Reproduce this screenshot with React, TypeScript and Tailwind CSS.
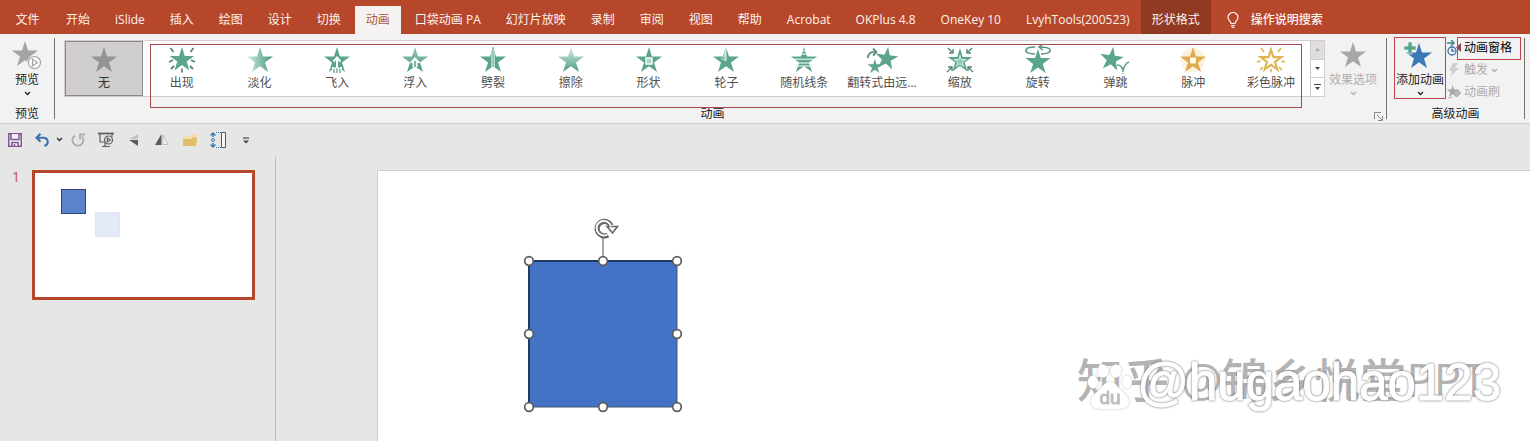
import { useState } from 'react'
import type { ReactNode } from 'react'

const STAR = '14,0 17,9.5 27,9.5 19,15.5 22,25 14,19.2 6,25 9,15.5 1,9.5 11,9.5'
const GREEN = '#5ba58c'
const GOLD = '#dfb552'

const tabs = ['开始', 'iSlide', '插入', '绘图', '设计', '切换', '动画', '口袋动画 PA', '幻灯片放映', '录制', '审阅', '视图', '帮助', 'Acrobat', 'OKPlus 4.8', 'OneKey 10', 'LvyhTools(200523)']

interface StarProps {
  fill?: string
  transform?: string
}

function Star({ fill = GREEN, transform }: StarProps) {
  return <polygon points={STAR} fill={fill} transform={transform} />
}

function Gradient({ id, from, to, vertical }: { id: string; from: string; to: string; vertical?: boolean }) {
  return (
    <linearGradient id={id} x1="0" y1="0" x2={vertical ? '0' : '1'} y2={vertical ? '1' : '0'}>
      <stop offset="0.1" stopColor={from} />
      <stop offset="0.9" stopColor={to} />
    </linearGradient>
  )
}

const effects: { name: string; icon: ReactNode }[] = [
  { name: '无', icon: <Star fill="#959392" /> },
  {
    name: '出现',
    icon: (
      <>
        <Star transform="translate(0.8 0) scale(0.94)" />
        <path d="M2.500 1l3 4M25.500 1l-3 4M1 15l4-2M27 15l-4-2M3 22l3-3M25 22l-3-3M14 21.500v4" stroke="#5b8478" strokeWidth="1.8" fill="none" />
      </>
    ),
  },
  {
    name: '淡化',
    icon: (
      <>
        <Gradient id="fade" from="#c5e2d8" to="#4f9f84" />
        <Star fill="url(#fade)" />
      </>
    ),
  },
  {
    name: '飞入',
    icon: (
      <>
        <Star />
        <path d="M14 10v13M10.5 14.5l3.5-4 3.5 4M10 20v6M18 20v6" stroke="#fff" strokeWidth="2" fill="none" />
        <path d="M11 22v4M14 21v5M17 22v4" stroke={GREEN} strokeWidth="1.3" fill="none" />
      </>
    ),
  },
  {
    name: '浮入',
    icon: (
      <>
        <Gradient id="float" from="#8fc1b0" to="#4f9f84" vertical />
        <Star fill="url(#float)" />
        <path d="M14 10l5.5 6h-3v4h-5v-4h-3z" fill="#fff" />
        <path d="M14 14v6" stroke={GREEN} strokeWidth="1.6" />
      </>
    ),
  },
  {
    name: '劈裂',
    icon: (
      <>
        <Star />
        <path d="M14 0l2 6v14.5l-2-1.3-2 1.3V6z" fill="#b5dacd" />
        <path d="M14 0v19" stroke="#7db5a2" />
      </>
    ),
  },
  {
    name: '擦除',
    icon: (
      <>
        <Gradient id="wipe" from="#c9e4db" to="#5ba58c" vertical />
        <Star fill="url(#wipe)" />
      </>
    ),
  },
  {
    name: '形状',
    icon: (
      <>
        <Star />
        <rect x="11" y="11" width="6" height="6" fill="#a9d5c5" stroke="#fff" strokeWidth="1.4" />
      </>
    ),
  },
  {
    name: '轮子',
    icon: (
      <>
        <Star />
        <path d="M14 0v14l-3-4.5z" fill="#b5dacd" />
        <path d="M14 0v14L9 11" fill="none" stroke="#fff" strokeWidth="0.8" />
      </>
    ),
  },
  {
    name: '随机线条',
    icon: (
      <>
        <Star />
        <path d="M9 4h10M9 7h10M0 12.2h28M0 16h28M0 19h28" stroke="#fff" strokeWidth="1" />
      </>
    ),
  },
  {
    name: '翻转式由远...',
    icon: (
      <>
        <Star transform="translate(8 -2) rotate(8) scale(0.88)" />
        <Star transform="translate(-1 12) scale(0.56)" />
        <path d="M0 11C0 6 3 4.500 8 5M5 1.500l3.500 3.500L5 8.500" stroke="#5b9180" strokeWidth="1.8" fill="none" />
      </>
    ),
  },
  {
    name: '缩放',
    icon: (
      <>
        <Star transform="translate(0.8 1) scale(0.94)" />
        <Star fill="#cfe9e0" transform="translate(6.300 6.800) scale(0.55)" />
        <Star fill="#8cc7b2" transform="translate(9.600 10) scale(0.32)" />
        <path d="M2 1l5 5M3 6h4V2M26 1l-5 5M25 6h-4V2M1 25l5-5M2 20h4v4M27 25l-5-5M26 20h-4v4" stroke="#5b8478" strokeWidth="1.4" fill="none" />
      </>
    ),
  },
  {
    name: '旋转',
    icon: (
      <>
        <Star transform="translate(0.5 2) scale(0.96)" />
        <path d="M11 7C4 7 1 5 2 2.500S8 0 11 0M17 7c7 0 10-2 9-4.500S20 0 15 0M19-3l-4 3 4 3" stroke="#5b9180" strokeWidth="1.5" fill="none" />
      </>
    ),
  },
  {
    name: '弹跳',
    icon: (
      <>
        <Star transform="translate(-0.500 -2) rotate(8) scale(0.92)" />
        <path d="M16 18c4 0 5 2 6 6 1-5 3-8 6-9" stroke={GREEN} strokeWidth="1.5" fill="none" />
        <path d="M22 20v7" stroke={GREEN} strokeWidth="1.3" strokeDasharray="2 1" />
      </>
    ),
  },
  {
    name: '脉冲',
    icon: (
      <>
        <circle cx="14" cy="13" r="12" fill="#f9e6c3" opacity="0.6" />
        <Star fill="#dfa94e" />
        <rect x="11" y="10.500" width="6" height="6" rx="1" fill="#fffbe9" />
      </>
    ),
  },
  {
    name: '彩色脉冲',
    icon: (
      <>
        <polygon points={STAR} fill="#fffdf4" stroke={GOLD} strokeWidth="2.6" transform="translate(2.800 2.500) scale(0.8)" />
        <path d="M4 1l3 4M24 1l-3 4M0 15l3.500-1M28 15l-3.500-1M3 23l3-3M25 23l-3-3M14 22v3.500" stroke={GOLD} strokeWidth="1.6" fill="none" />
      </>
    ),
  },
]

function StarIcon({ children }: { children: ReactNode }) {
  return (
    <svg width="28" height="26" viewBox="0 0 28 26" className="shrink-0 overflow-visible">
      {children}
    </svg>
  )
}

function Chevron({ className }: { className?: string }) {
  return (
    <svg width="7" height="5" viewBox="0 0 7 5" fill="none" stroke="currentColor" strokeWidth="1.3" className={className}>
      <path d="M1 1l2.500 2.500L6 1" />
    </svg>
  )
}

function Divider() {
  return <div className="mt-1 mb-1 w-px shrink-0 bg-[#77706e]" />
}

function TabBar() {
  const [active, setActive] = useState('动画')
  return (
    <nav className="flex h-[34px] items-end overflow-hidden bg-[#b7472a] text-xs whitespace-nowrap text-[#fdf3ee]">
      <button className="h-7 w-[55px] shrink-0">文件</button>
      <div className="flex shrink-0 gap-[3px]">
        {tabs.map((tab) => (
          <button
            key={tab}
            onClick={() => setActive(tab)}
            className={`h-7 shrink-0 px-[11px] ${tab === active ? 'bg-[#f5f3f2] text-[#b0563a]' : ''}`}
          >
            {tab}
          </button>
        ))}
      </div>
      <button className="h-[34px] shrink-0 bg-[#923921] px-[11px] pt-1.5">形状格式</button>
      <label className="flex h-7 items-center gap-3 pl-4">
        <svg width="12" height="16" viewBox="0 0 12 16" fill="none" stroke="currentColor" strokeWidth="1.2">
          <path d="M4 11.500C4 9 1 8.500 1 5.500a5 5 0 0110 0c0 3-3 3.500-3 6zM4 13.500h4M4.500 15.300h3" />
        </svg>
        <input
          aria-label="操作说明搜索"
          placeholder="操作说明搜索"
          className="w-28 bg-transparent font-medium outline-none placeholder:text-[#fdf3ee] placeholder:opacity-100"
        />
      </label>
    </nav>
  )
}

function Gallery() {
  const [selected, setSelected] = useState('无')
  return (
    <div className="relative mt-1.5 flex h-[57px] min-w-0 flex-1 border border-[#d2cccc] bg-white">
      {effects.map(({ name, icon }) => (
        <button
          key={name}
          onClick={() => setSelected(name)}
          className={`flex min-w-0 flex-1 flex-col items-center border pt-[5px] leading-4 whitespace-nowrap ${
            selected === name ? 'border-[#8b8987] bg-[#d0cfcd] text-[#333]' : 'border-transparent text-[#505050]'
          }`}
        >
          <StarIcon>{icon}</StarIcon>
          <span className="mt-0.5">{name}</span>
        </button>
      ))}
      <div className="flex w-[14px] shrink-0 flex-col divide-y divide-[#d2cccc] border-l border-[#d2cccc] text-[#444]">
        <button aria-label="上一行" className="flex flex-1 items-center justify-center bg-[#dfdddd] text-[#aaa]">
          <svg width="5" height="3" viewBox="0 0 5 3" fill="currentColor"><path d="M0 3l2.500-3L5 3z" /></svg>
        </button>
        <button aria-label="下一行" className="flex flex-1 items-center justify-center">
          <svg width="5" height="3" viewBox="0 0 5 3" fill="currentColor"><path d="M0 0h5L2.500 3z" /></svg>
        </button>
        <button aria-label="其他" className="flex flex-1 items-center justify-center">
          <svg width="7" height="6" viewBox="0 0 7 6" fill="currentColor"><path d="M0 0h7v1H0zM1 3h5L3.500 6z" /></svg>
        </button>
      </div>
      {/* Marker around the effects */}
      <div className="pointer-events-none absolute top-[3px] right-[22px] -bottom-3 left-[85px] border border-[#a64850]" />
    </div>
  )
}

function Ribbon() {
  return (
    <section className="flex h-[90px] border-b border-[#d3d1d0] bg-[#f3f2f2] text-xs whitespace-nowrap text-[#222]">
      <div className="flex w-[54px] shrink-0 flex-col">
        <button className="flex flex-1 flex-col items-center pt-[7px] leading-4">
          <svg width="30" height="30" viewBox="0 0 30 30" className="mb-px">
            <Star fill="#a5a3a3" transform="translate(-1 0)" />
            <circle cx="22.500" cy="21.500" r="7.300" fill="#f3f2f2" />
            <circle cx="22.500" cy="21.500" r="6" fill="#fff" stroke="#a5a3a3" strokeWidth="1.200" />
            <path d="M20.500 18.200l5 3.300-5 3.300z" fill="none" stroke="#a5a3a3" strokeWidth="1.200" />
          </svg>
          预览
          <Chevron className="mt-[3px]" />
        </button>
        <p className="h-5 pt-px text-center leading-5">预览</p>
      </div>
      <Divider />
      <div className="flex min-w-0 flex-1 flex-col">
        <div className="flex flex-1 pr-[5px] pl-[9px]">
          <Gallery />
          <button className="flex w-14 shrink-0 flex-col items-center pt-2 leading-4 text-[#b0aeae]">
            <StarIcon>
              <Star fill="#a8a6a6" />
            </StarIcon>
            <span className="mt-1">效果选项</span>
            <Chevron className="mt-[3px]" />
          </button>
        </div>
        <div className="flex h-5 leading-5">
          <p className="flex-1 pt-px pr-1 text-center">动画</p>
          <button aria-label="动画设置" className="flex w-3 items-center pt-1.5">
            <svg width="9" height="9" viewBox="0 0 9 9" fill="none" stroke="#8a8888">
              <path d="M.5 7V.5H7M3 3l5 5M8.500 4v4.500H4" />
            </svg>
          </button>
        </div>
      </div>
      <Divider />
      <div className="flex w-[137px] shrink-0 flex-col">
        <div className="flex flex-1 pl-[7px]">
          <button className="mt-[3px] mb-1 flex w-[52px] shrink-0 flex-col items-center border border-[#c0444c] pt-1 leading-4">
            <svg width="32" height="28" viewBox="0 0 32 28" className="mb-0.5">
              <Star fill="#3a78b7" transform="translate(1 1)" />
              <path d="M4 0h4v4h4v4H8v4H4V8H0V4h4z" fill="#5ba58c" stroke="#f3f2f2" strokeWidth="0.600" />
            </svg>
            添加动画
            <Chevron className="mt-[3px]" />
          </button>
          <div className="relative flex flex-col pt-[3px] pl-px">
            <button className="flex h-[22px] items-center gap-[3px] text-black">
              <svg width="14" height="16" viewBox="0 0 14 16" fill="none" strokeWidth="1.400">
                <path d="M0 3h6M4 0l3 3-3 3" stroke="#3a8780" />
                <circle cx="5" cy="11" r="4" stroke="#3c78ac" />
                <path d="M5 8.500V11h2.500" stroke="#3c78ac" />
                <path d="M14 3v9L9 7.500z" fill="#8b4450" />
              </svg>
              动画窗格
            </button>
            <button className="flex h-[22px] items-center gap-[3px] text-[#aeacac]">
              <svg width="14" height="14" viewBox="0 0 14 14" fill="#cfcdcd">
                <path d="M6 0h5L8 5h4L3 14l2.500-6H2z" />
              </svg>
              触发
              <Chevron />
            </button>
            <button className="flex h-[21px] items-center gap-[3px] text-[#aeacac]">
              <svg width="14" height="14" viewBox="0 0 14 14">
                <Star fill="#a8a6a6" transform="translate(-1 0) scale(0.480)" />
                <path d="M7 10l4-5 3 3-4 4zM1 13l5-1" fill="#b8b6b6" stroke="#b8b6b6" />
              </svg>
              动画刷
            </button>
            <div className="pointer-events-none absolute top-[3px] left-[11px] h-[23px] w-16 border border-[#c0444c]" />
          </div>
        </div>
        <p className="h-5 pt-px text-center leading-5">高级动画</p>
      </div>
      <Divider />
      <div className="w-[5px] shrink-0" />
    </section>
  )
}

const quickTools: { label: string; icon: ReactNode }[] = [
  {
    label: '重做',
    icon: <path d="M5 3.500a5.500 5.500 0 107 1M10 7.500V2.500h5" fill="none" stroke="#adabab" strokeWidth="1.800" />,
  },
  {
    label: '从头开始放映',
    icon: (
      <g fill="none" stroke="#5f5f5f" strokeWidth="1.200">
        <path d="M0 1.500h16" strokeWidth="1.800" />
        <path d="M2 2v8h4M7 10v4M4 14.500h8M14 2v3" />
        <circle cx="10.500" cy="8" r="4" />
        <path d="M9.300 6l3 2-3 2z" />
      </g>
    ),
  },
  {
    label: '垂直翻转',
    icon: (
      <>
        <path d="M12 2v5H3z" fill="#c4c2c2" />
        <path d="M12 14V8H3z" fill="#5a5a5a" />
      </>
    ),
  },
  {
    label: '水平翻转',
    icon: (
      <>
        <path d="M7.500 2v11H1z" fill="#5a5a5a" />
        <path d="M9 3v9.500h5z" fill="#f2f2f2" stroke="#b5b3b3" strokeWidth="0.800" />
      </>
    ),
  },
  {
    label: '打开',
    icon: (
      <>
        <path d="M1 4h6l2-2h6v11H1z" fill="#f3dfae" />
        <path d="M1 14V7h8l1.500-1.500H15L14 14z" fill="#e2bd68" />
      </>
    ),
  },
  {
    label: '等高',
    icon: (
      <g fill="none">
        <path d="M3 1v4M3 11v4M.5 3.500L3 1l2.500 2.500M.5 12.500L3 15l2.500-2.500" stroke="#3b77a8" strokeWidth="1.400" />
        <circle cx="3" cy="8" r="1.500" stroke="#3b77a8" />
        <path d="M6 .5h5M6 15.500h5" stroke="#3b77a8" strokeDasharray="1 1" />
        <path d="M11.500.5h4v15h-4z" fill="#f8f8f8" stroke="#555" />
      </g>
    ),
  },
  {
    label: '自定义快速访问工具栏',
    icon: (
      <>
        <path d="M5 6h6" stroke="#444" strokeWidth="1.200" />
        <path d="M5 8.500h6L8 11.500z" fill="#444" />
      </>
    ),
  },
]

function QuickAccess() {
  return (
    <div className="flex h-[33px] items-center pb-0.5 pl-px">
      <button aria-label="保存" className="flex w-7 justify-center">
        <svg width="14" height="14" viewBox="0 0 14 14" fill="#f7f2f8" stroke="#7c5690" strokeWidth="1.500">
          <path d="M.8.800h12.400v12.400H.8z" />
          <path d="M3 1v5.500h8V1M4 13V9.500h6V13M6.500 11v2" />
        </svg>
      </button>
      <button aria-label="撤消" className="flex w-[26px] justify-center">
        <svg width="14" height="14" viewBox="0 0 14 14" fill="none" stroke="#3a70ad" strokeWidth="2">
          <path d="M5.500.800L1.500 4.800l4 4M1.500 4.800h6.500c6 0 6 6.500 1.500 8.200" />
        </svg>
      </button>
      <button aria-label="撤消列表" className="flex w-[9px] justify-center text-[#333]">
        <Chevron />
      </button>
      {quickTools.map(({ label, icon }) => (
        <button key={label} aria-label={label} className="flex w-7 justify-center">
          <svg width="16" height="16" viewBox="0 0 16 16">{icon}</svg>
        </button>
      ))}
    </div>
  )
}

function SlidePanel() {
  return (
    <aside className="flex w-[276px] shrink-0 border-r border-[#bdbdbd] pt-[13px] pl-3">
      <span className="w-5 text-sm leading-[14px] font-medium text-[#c4553a]">1</span>
      <button aria-label="幻灯片 1" className="relative h-[130px] w-[223px] border-3 border-[#b7472a] bg-white">
        <span className="absolute top-4 left-[26px] size-[25px] border border-[#2f456f] bg-[#5b83cb]" />
        <span className="absolute top-[39px] left-[60px] size-[25px] border border-[#dfe5f3] bg-[#e4eaf7]" />
      </button>
    </aside>
  )
}

function SelectedShape() {
  const handles = [[8, 40], [82, 40], [156, 40], [8, 113], [156, 113], [8, 186], [82, 186], [156, 186]]
  return (
    <svg width="166" height="196" viewBox="0 0 166 196" className="absolute top-[50px] left-[143px] overflow-visible">
      <rect x="8" y="40" width="148" height="146" fill="#4472c4" stroke="#44546a" />
      <path d="M8 186V40h148" fill="none" stroke="#213b60" strokeWidth="2" />
      <path d="M82 17v20" stroke="#777" strokeWidth="1.300" />
      {/* Rotate handle */}
      <path d="M90 4.500A7.300 7.300 0 1087 14" fill="none" stroke="#696969" strokeWidth="5.200" />
      <path d="M86 5.500h10.500L91.500 12z" fill="#fff" stroke="#696969" strokeWidth="1.600" />
      <path d="M90 5.500A7.300 7.300 0 1086.500 13.500" fill="none" stroke="#fff" strokeWidth="1.900" />
      {handles.map(([x, y]) => (
        <circle key={`${x}-${y}`} cx={x} cy={y} r="4.300" fill="#fff" stroke="#5c5c5c" strokeWidth="1.700" />
      ))}
    </svg>
  )
}

function Watermark() {
  return (
    <div className="pointer-events-none absolute right-[29px] bottom-[22px] h-16 w-[424px] whitespace-nowrap">
      <p className="absolute -top-1 left-0 text-[46px] leading-[56px] font-medium text-[#b3b3b3]">知乎 @锦乡悦堂PPT</p>
      <svg width="56" height="56" viewBox="0 0 56 56" className="absolute top-[7px] left-2 drop-shadow-[0_0_1px_#bbb]">
        <g fill="#fff">
          <ellipse cx="18" cy="9" rx="5.500" ry="6.500" />
          <ellipse cx="31" cy="9" rx="5.500" ry="6.500" />
          <ellipse cx="8" cy="20" rx="5" ry="6.500" />
          <ellipse cx="42" cy="20" rx="5" ry="6.500" />
          <path d="M25 20c6 0 8 6 12 9 5 4 8 8 7 12-1 6-7 6-19 6S7 47 6 41c-1-4 2-8 7-12 4-3 6-9 12-9z" />
        </g>
        <text x="25" y="42" textAnchor="middle" fontSize="19" fontFamily="Liberation Sans, sans-serif" stroke="#bdbdbd" fill="#bdbdbd">du</text>
      </svg>
      <p className="absolute top-0 right-0 font-['Liberation_Sans',sans-serif] text-[51px] leading-[56px] text-white drop-shadow-[0_0_1px_#666] [-webkit-text-stroke:1px_#fff]">
        @hugaohao123
      </p>
    </div>
  )
}

export default function App() {
  return (
    <div className="flex min-h-screen flex-col overflow-hidden bg-[#e6e6e6] font-['Open_Sans','Noto_Sans_CJK_SC',sans-serif]">
      <TabBar />
      <Ribbon />
      <QuickAccess />
      <div className="flex flex-1">
        <SlidePanel />
        <main className="flex flex-1 pt-[13px] pl-[101px]">
          <div className="relative flex-1 border-t border-l border-[#cfcfcf] bg-white">
            <SelectedShape />
            <Watermark />
          </div>
        </main>
      </div>
    </div>
  )
}
